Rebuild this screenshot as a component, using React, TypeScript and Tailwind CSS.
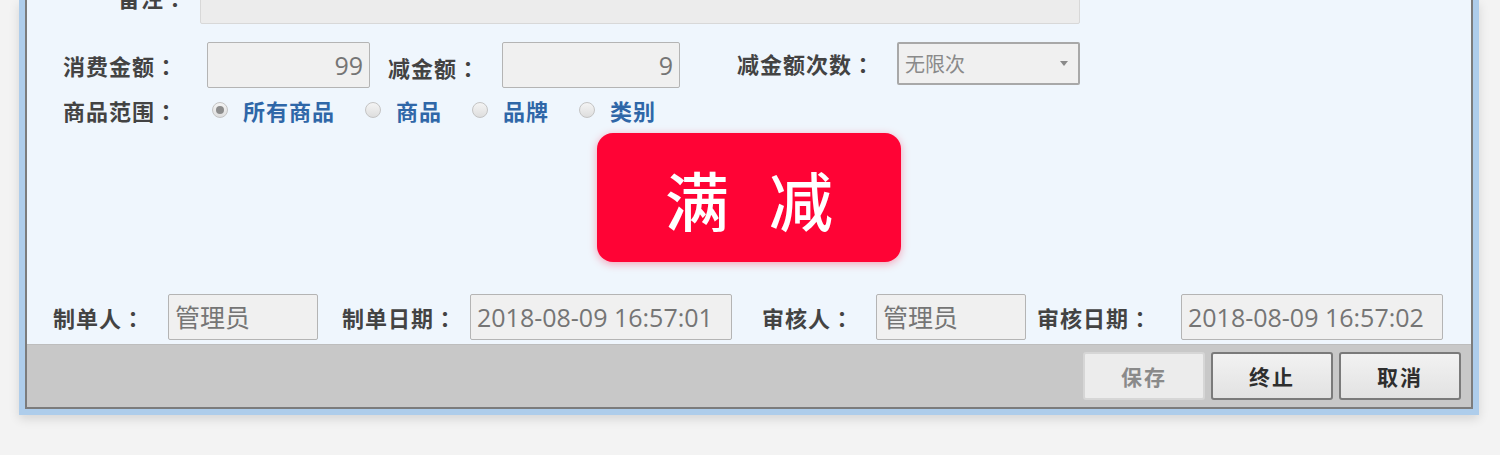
import React from "react";

const CJK = { fontFamily: '"Noto Sans CJK SC", "Noto Sans", sans-serif' };
const TC = { fontFamily: '"Noto Sans CJK TC", "Noto Sans CJK SC", sans-serif' };
const NUM = { fontFamily: '"Open Sans", "Noto Sans CJK SC", sans-serif' };

function Label({ text, w }: { text: string; w: string }) {
  return (
    <div
      className={`${w} shrink-0 text-[22px] tracking-[1px] font-semibold text-[#434343] leading-none whitespace-nowrap`}
      style={CJK}
    >
      {text}
      <span style={TC}>：</span>
    </div>
  );
}

function Field({ value, w, right }: { value: string; w: string; right?: boolean }) {
  return (
    <div
      className={`${w} h-[46px] shrink-0 rounded-[2px] border border-[#b4b4b4] bg-[#f0f0f0] flex items-center px-[6px] text-[25px] text-[#757575] leading-none ${right ? "justify-end" : ""}`}
      style={NUM}
    >
      {value}
    </div>
  );
}

function Radio({ checked, label }: { checked?: boolean; label: string }) {
  return (
    <div className="flex items-center shrink-0">
      <div className="w-[16px] h-[16px] rounded-full border border-[#c4c4c4] bg-gradient-to-b from-[#f4f4f4] to-[#dedede] flex items-center justify-center">
        {checked && <div className="w-[8px] h-[8px] rounded-full bg-[#8c8c8c]" />}
      </div>
      <span
        className="ml-[15px] text-[22px] tracking-[1px] leading-none text-[#2f67a8] font-semibold whitespace-nowrap"
        style={CJK}
      >
        {label}
      </span>
    </div>
  );
}

function Btn({ text, disabled }: { text: string; disabled?: boolean }) {
  return (
    <div
      className={`w-[122px] h-[48px] flex items-center justify-center rounded-[3px] text-[21px] tracking-[2px] leading-none font-semibold ${
        disabled
          ? "border-2 border-[#d6d6d6] bg-[#ececec] text-[#8a8a8a]"
          : "border-2 border-[#7a7a7a] bg-gradient-to-b from-[#f2f2f2] to-[#e2e2e2] text-[#2e2e2e]"
      }`}
      style={CJK}
    >
      {text}
    </div>
  );
}

export default function App() {
  return (
    <div className="w-[1500px] h-[455px] bg-[#f3f3f3] overflow-hidden">
      <div className="ml-[19px] w-[1460px] bg-[#aecdeb] px-[6px] pb-[6px] shadow-[0_4px_10px_rgba(0,0,0,0.12)]">
        <div className="border-x-2 border-b-2 border-[#7c7c7c] bg-[#eff6fd]">
          {/* remark row */}
          <div className="h-[24px] flex items-center">
            <div className="ml-[91px] w-[82px] -mt-[30px]">
              <Label text="备注" w="w-[82px]" />
            </div>
            <div className="w-[880px] h-[46px] -mt-[22px] rounded-[2px] border border-[#d8d8d8] bg-[#ececec]" />
          </div>

          {/* row 1 */}
          <div className="mt-[18px] h-[46px] flex items-center">
            <div className="ml-[36px]">
              <Label text="消费金额" w="w-[115px]" />
            </div>
            <div className="ml-[29px]">
              <Field value="99" w="w-[163px]" right />
            </div>
            <div className="ml-[18px] mt-[4px]">
              <Label text="减金额" w="w-[92px]" />
            </div>
            <div className="ml-[22px]">
              <Field value="9" w="w-[178px]" right />
            </div>
            <div className="ml-[57px] -mt-[4px]">
              <Label text="减金额次数" w="w-[138px]" />
            </div>
            <div className="ml-[22px] -mt-[3px] w-[183px] h-[43px] rounded-[2px] border-2 border-[#a8a8a8] bg-[#f0f0f0] flex items-center justify-between pl-[6px] pr-[10px]">
              <span className="text-[20px] text-[#8a8a8a] leading-none" style={CJK}>
                无限次
              </span>
              <svg width="8" height="5" viewBox="0 0 8 5">
                <path d="M0 0 L8 0 L4 5 Z" fill="#8a8a8a" />
              </svg>
            </div>
          </div>

          {/* row 2 */}
          <div className="mt-[10px] h-[24px] flex items-center">
            <div className="ml-[36px]">
              <Label text="商品范围" w="w-[115px]" />
            </div>
            <div className="ml-[34px] flex items-center gap-[30px]">
              <Radio checked label="所有商品" />
              <Radio label="商品" />
              <Radio label="品牌" />
              <Radio label="类别" />
            </div>
          </div>

          {/* promo badge */}
          <div className="mt-[11px] flex justify-center">
            <div className="w-[304px] h-[129px] rounded-[16px] bg-[#ff0335] shadow-[0_2px_8px_rgba(255,0,50,0.35)] flex items-center justify-center gap-[40px]">
              <span className="text-[64px] leading-none text-white font-medium" style={CJK}>
                满
              </span>
              <span className="text-[64px] leading-none text-white font-medium" style={CJK}>
                减
              </span>
            </div>
          </div>

          {/* bottom row */}
          <div className="mt-[32px] h-[46px] flex items-center">
            <div className="ml-[26px]">
              <Label text="制单人" w="w-[92px]" />
            </div>
            <div className="ml-[23px]">
              <Field value="管理员" w="w-[150px]" />
            </div>
            <div className="ml-[24px]">
              <Label text="制单日期" w="w-[115px]" />
            </div>
            <div className="ml-[13px]">
              <Field value="2018-08-09 16:57:01" w="w-[262px]" />
            </div>
            <div className="ml-[30px]">
              <Label text="审核人" w="w-[92px]" />
            </div>
            <div className="ml-[22px]">
              <Field value="管理员" w="w-[150px]" />
            </div>
            <div className="ml-[11px]">
              <Label text="审核日期" w="w-[115px]" />
            </div>
            <div className="ml-[29px]">
              <Field value="2018-08-09 16:57:02" w="w-[262px]" />
            </div>
          </div>

          {/* footer */}
          <div className="mt-[4px] h-[63px] bg-[#c8c8c8] border-t border-[#bdbdbd] flex items-start justify-end pt-[7px] pr-[10px] gap-[6px]">
            <Btn text="保存" disabled />
            <Btn text="终止" />
            <Btn text="取消" />
          </div>
        </div>
      </div>
    </div>
  );
}
